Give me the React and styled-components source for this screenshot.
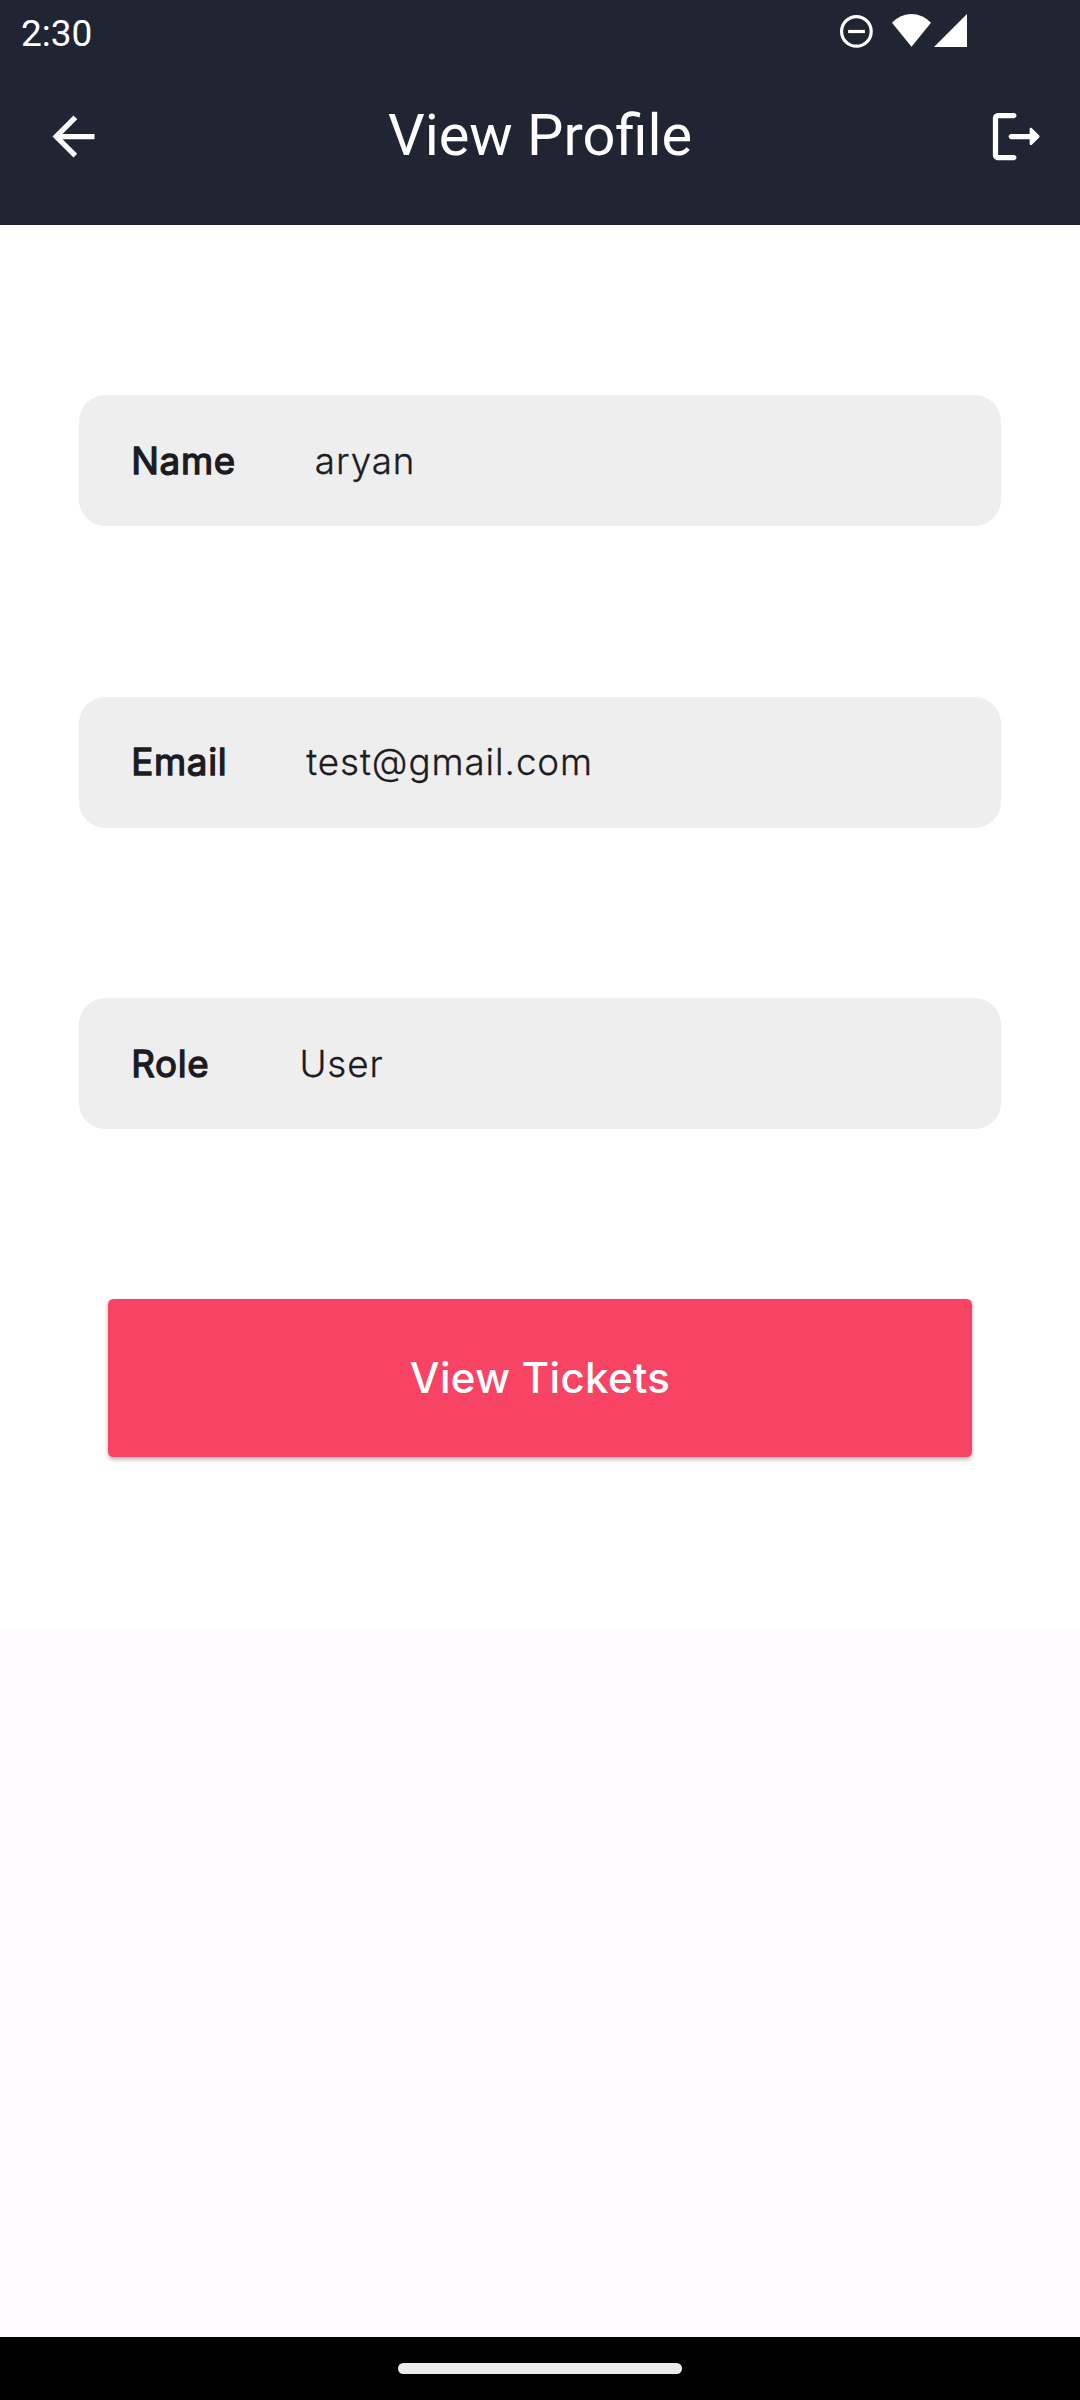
import React from 'react';
import styled, { createGlobalStyle } from 'styled-components';

const GlobalStyle = createGlobalStyle`
  *, *::before, *::after { box-sizing: border-box; }
  body { margin: 0; background: #fffbff; }
`;

const Screen = styled.div`
  display: flex;
  flex-direction: column;
  width: 1080px;
  height: 2400px;
  background: #fffbff;
  overflow: hidden;
`;

const Header = styled.header`
  flex: none;
  height: 225px;
  background: #1f2533;
  color: #fff;
  font-family: Roboto, sans-serif;
`;

const StatusBar = styled.div`
  display: flex;
  justify-content: space-between;
  align-items: center;
  height: 63px;
  padding: 0 113px 0 21px;
`;

const Clock = styled.span`
  font-size: 37px;
  line-height: 44px;
  padding-top: 4px;
`;

const StatusIcons = styled.div`
  display: flex;
  align-items: center;

  svg { display: block; }
`;

const Toolbar = styled.div`
  display: grid;
  grid-template-columns: 63px 1fr 63px;
  align-items: center;
  height: 147px;
  padding: 0 32.5px 0 42px;
`;

const Title = styled.h1`
  margin: 0;
  padding: 0 9.5px 4px 0;
  text-align: center;
  font-size: 57.75px;
  font-weight: 400;
  line-height: 68px;
`;

const ToolButton = styled.button`
  display: block;
  width: 63px;
  height: 63px;
  padding: 0;
  border: 0;
  background: none;
  color: inherit;

  svg { display: block; width: 63px; height: 63px; fill: currentColor; }
`;

const Content = styled.main`
  flex: none;
  display: flex;
  flex-direction: column;
  align-items: center;
  gap: 170.2px;
  padding: 170.1px 78.75px 170.2px;
  background: #fff;
  font-family: Inter, sans-serif;
`;

const Field = styled.div`
  display: flex;
  align-items: center;
  gap: 79px;
  width: 100%;
  height: 131.25px;
  padding: 0.9px 52.5px 0;
  border-radius: 26.25px;
  background: #eeeeee;
  color: #1c1b1f;
  font-size: 36.75px;
  line-height: 52.5px;
  white-space: pre;
`;

const Label = styled.span`
  letter-spacing: 0.66px;
  -webkit-text-stroke: 1.3px #1c1b1f;
`;

const Value = styled.span`
  font-weight: 350;
  letter-spacing: 0.92px;
  -webkit-text-stroke: 0.3px #1c1b1f;
`;

const PrimaryButton = styled.button`
  width: 864px;
  height: 157.5px;
  padding: 0 0 2px;
  border: 0;
  border-radius: 5.25px;
  background: #f84464;
  box-shadow: 0 3px 4px rgba(0, 0, 0, 0.2), 0 1px 4px rgba(0, 0, 0, 0.12);
  color: #fff;
  font-family: inherit;
  font-size: 42px;
  font-weight: 500;
  letter-spacing: 0.33px;
`;

const NavBar = styled.footer`
  display: flex;
  justify-content: center;
  align-items: center;
  height: 63px;
  margin-top: auto;
  background: #000;
`;

const NavHandle = styled.div`
  width: 284px;
  height: 10.5px;
  border-radius: 5.25px;
  background: #ebebeb;
`;

const fields = [
  { label: 'Name', value: 'aryan' },
  { label: 'Email', value: 'test@gmail.com' },
  { label: 'Role ', value: 'User' },
];

export default function App() {
  return (
    <>
      <GlobalStyle />
      <Screen>
        <Header>
          <StatusBar>
            <Clock>2:30</Clock>
            <StatusIcons>
              <svg width="127" height="63" viewBox="0 0 127 63" fill="#fff">
                <circle cx="16.4" cy="31.4" r="14.8" fill="none" stroke="#fff" strokeWidth="3.2" />
                <rect x="8.1" y="29.9" width="16.8" height="3.2" />
                <path d="M52 22.7Q60.500 14 71.500 14T91 22.700L71.500 46.700Z" />
                <path d="M94 46.900L127 14V46.900Z" />
              </svg>
            </StatusIcons>
          </StatusBar>
          <Toolbar>
            <ToolButton aria-label="Back">
              <svg viewBox="0 0 24 24">
                <path d="M20 11H7.830l5.590-5.590L12 4l-8 8 8 8 1.410-1.410L7.830 13H20v-2z" />
              </svg>
            </ToolButton>
            <Title>View Profile</Title>
            <ToolButton aria-label="Log out">
              <svg viewBox="0 0 24 24">
                <path d="M5 5h6c.55 0 1-.45 1-1s-.45-1-1-1H5c-1.100 0-2 .9-2 2v14c0 1.100.9 2 2 2h6c.55 0 1-.45 1-1s-.45-1-1-1H5V5z" />
                <path d="M20.650 11.650l-2.790-2.790c-.32-.32-.86-.1-.86.35V11h-7c-.55 0-1 .45-1 1s.45 1 1 1h7v1.790c0 .45.54.67.85.35l2.790-2.790c.2-.19.2-.51.010-.7z" />
              </svg>
            </ToolButton>
          </Toolbar>
        </Header>
        <Content>
          {fields.map(({ label, value }) => (
            <Field key={label}>
              <Label>{label}</Label>
              <Value>{value}</Value>
            </Field>
          ))}
          <PrimaryButton>View Tickets</PrimaryButton>
        </Content>
        <NavBar>
          <NavHandle />
        </NavBar>
      </Screen>
    </>
  );
}
